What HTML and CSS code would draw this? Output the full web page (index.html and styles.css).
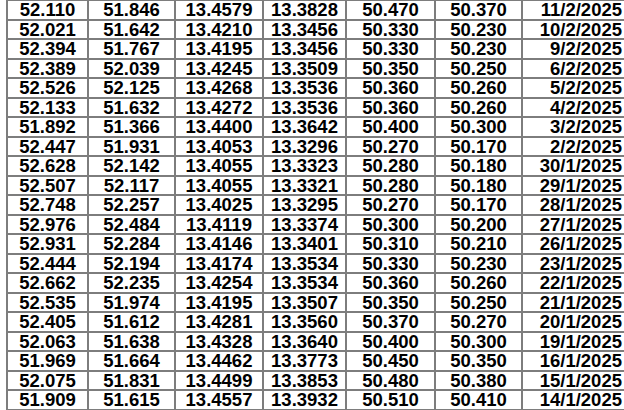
FILE: index.html
```html
<!DOCTYPE html>
<html>
<head>
<meta charset="utf-8">
<link rel="stylesheet" href="styles.css">
</head>
<body>
<table class="rates">
<colgroup>
<col class="c1"><col class="c2"><col class="c3"><col class="c4"><col class="c5"><col class="c6"><col class="c7">
</colgroup>
<tbody>
<tr><td>52.110</td><td>51.846</td><td>13.4579</td><td>13.3828</td><td>50.470</td><td>50.370</td><td class="date">11/2/2025</td></tr>
<tr><td>52.021</td><td>51.642</td><td>13.4210</td><td>13.3456</td><td>50.330</td><td>50.230</td><td class="date">10/2/2025</td></tr>
<tr><td>52.394</td><td>51.767</td><td>13.4195</td><td>13.3456</td><td>50.330</td><td>50.230</td><td class="date">9/2/2025</td></tr>
<tr><td>52.389</td><td>52.039</td><td>13.4245</td><td>13.3509</td><td>50.350</td><td>50.250</td><td class="date">6/2/2025</td></tr>
<tr><td>52.526</td><td>52.125</td><td>13.4268</td><td>13.3536</td><td>50.360</td><td>50.260</td><td class="date">5/2/2025</td></tr>
<tr><td>52.133</td><td>51.632</td><td>13.4272</td><td>13.3536</td><td>50.360</td><td>50.260</td><td class="date">4/2/2025</td></tr>
<tr><td>51.892</td><td>51.366</td><td>13.4400</td><td>13.3642</td><td>50.400</td><td>50.300</td><td class="date">3/2/2025</td></tr>
<tr><td>52.447</td><td>51.931</td><td>13.4053</td><td>13.3296</td><td>50.270</td><td>50.170</td><td class="date">2/2/2025</td></tr>
<tr><td>52.628</td><td>52.142</td><td>13.4055</td><td>13.3323</td><td>50.280</td><td>50.180</td><td class="date">30/1/2025</td></tr>
<tr><td>52.507</td><td>52.117</td><td>13.4055</td><td>13.3321</td><td>50.280</td><td>50.180</td><td class="date">29/1/2025</td></tr>
<tr><td>52.748</td><td>52.257</td><td>13.4025</td><td>13.3295</td><td>50.270</td><td>50.170</td><td class="date">28/1/2025</td></tr>
<tr><td>52.976</td><td>52.484</td><td>13.4119</td><td>13.3374</td><td>50.300</td><td>50.200</td><td class="date">27/1/2025</td></tr>
<tr><td>52.931</td><td>52.284</td><td>13.4146</td><td>13.3401</td><td>50.310</td><td>50.210</td><td class="date">26/1/2025</td></tr>
<tr><td>52.444</td><td>52.194</td><td>13.4174</td><td>13.3534</td><td>50.330</td><td>50.230</td><td class="date">23/1/2025</td></tr>
<tr><td>52.662</td><td>52.235</td><td>13.4254</td><td>13.3534</td><td>50.360</td><td>50.260</td><td class="date">22/1/2025</td></tr>
<tr><td>52.535</td><td>51.974</td><td>13.4195</td><td>13.3507</td><td>50.350</td><td>50.250</td><td class="date">21/1/2025</td></tr>
<tr><td>52.405</td><td>51.612</td><td>13.4281</td><td>13.3560</td><td>50.370</td><td>50.270</td><td class="date">20/1/2025</td></tr>
<tr><td>52.063</td><td>51.638</td><td>13.4328</td><td>13.3640</td><td>50.400</td><td>50.300</td><td class="date">19/1/2025</td></tr>
<tr><td>51.969</td><td>51.664</td><td>13.4462</td><td>13.3773</td><td>50.450</td><td>50.350</td><td class="date">16/1/2025</td></tr>
<tr><td>52.075</td><td>51.831</td><td>13.4499</td><td>13.3853</td><td>50.480</td><td>50.380</td><td class="date">15/1/2025</td></tr>
<tr><td>51.909</td><td>51.615</td><td>13.4557</td><td>13.3932</td><td>50.510</td><td>50.410</td><td class="date">14/1/2025</td></tr>
</tbody>
</table>
</body>
</html>
```
FILE: styles.css
```css
html, body {
  margin: 0;
  padding: 0;
  background: #ffffff;
  overflow: hidden;
}
body {
  width: 624px;
  height: 410px;
}
.rates {
  border-collapse: collapse;
  table-layout: fixed;
  margin: -1px 0 0 6px;
  width: 618px;
  font-family: "Liberation Sans", Arial, sans-serif;
  font-weight: bold;
  font-size: 18.5px;
  color: #000;
}
.c1 { width: 81px; }
.c2 { width: 87px; }
.c3 { width: 88px; }
.c4 { width: 83px; }
.c5 { width: 89px; }
.c6 { width: 87px; }
.c7 { width: 103px; }
.rates tr {
  height: 19.5px;
}
.rates td {
  border: 2px solid #7d7d7d;
  padding: 0;
  line-height: 17px;
  text-align: center;
  vertical-align: middle;
  white-space: nowrap;
  overflow: hidden;
}
.rates td.date {
  text-align: right;
  padding-right: 2px;
}
```
